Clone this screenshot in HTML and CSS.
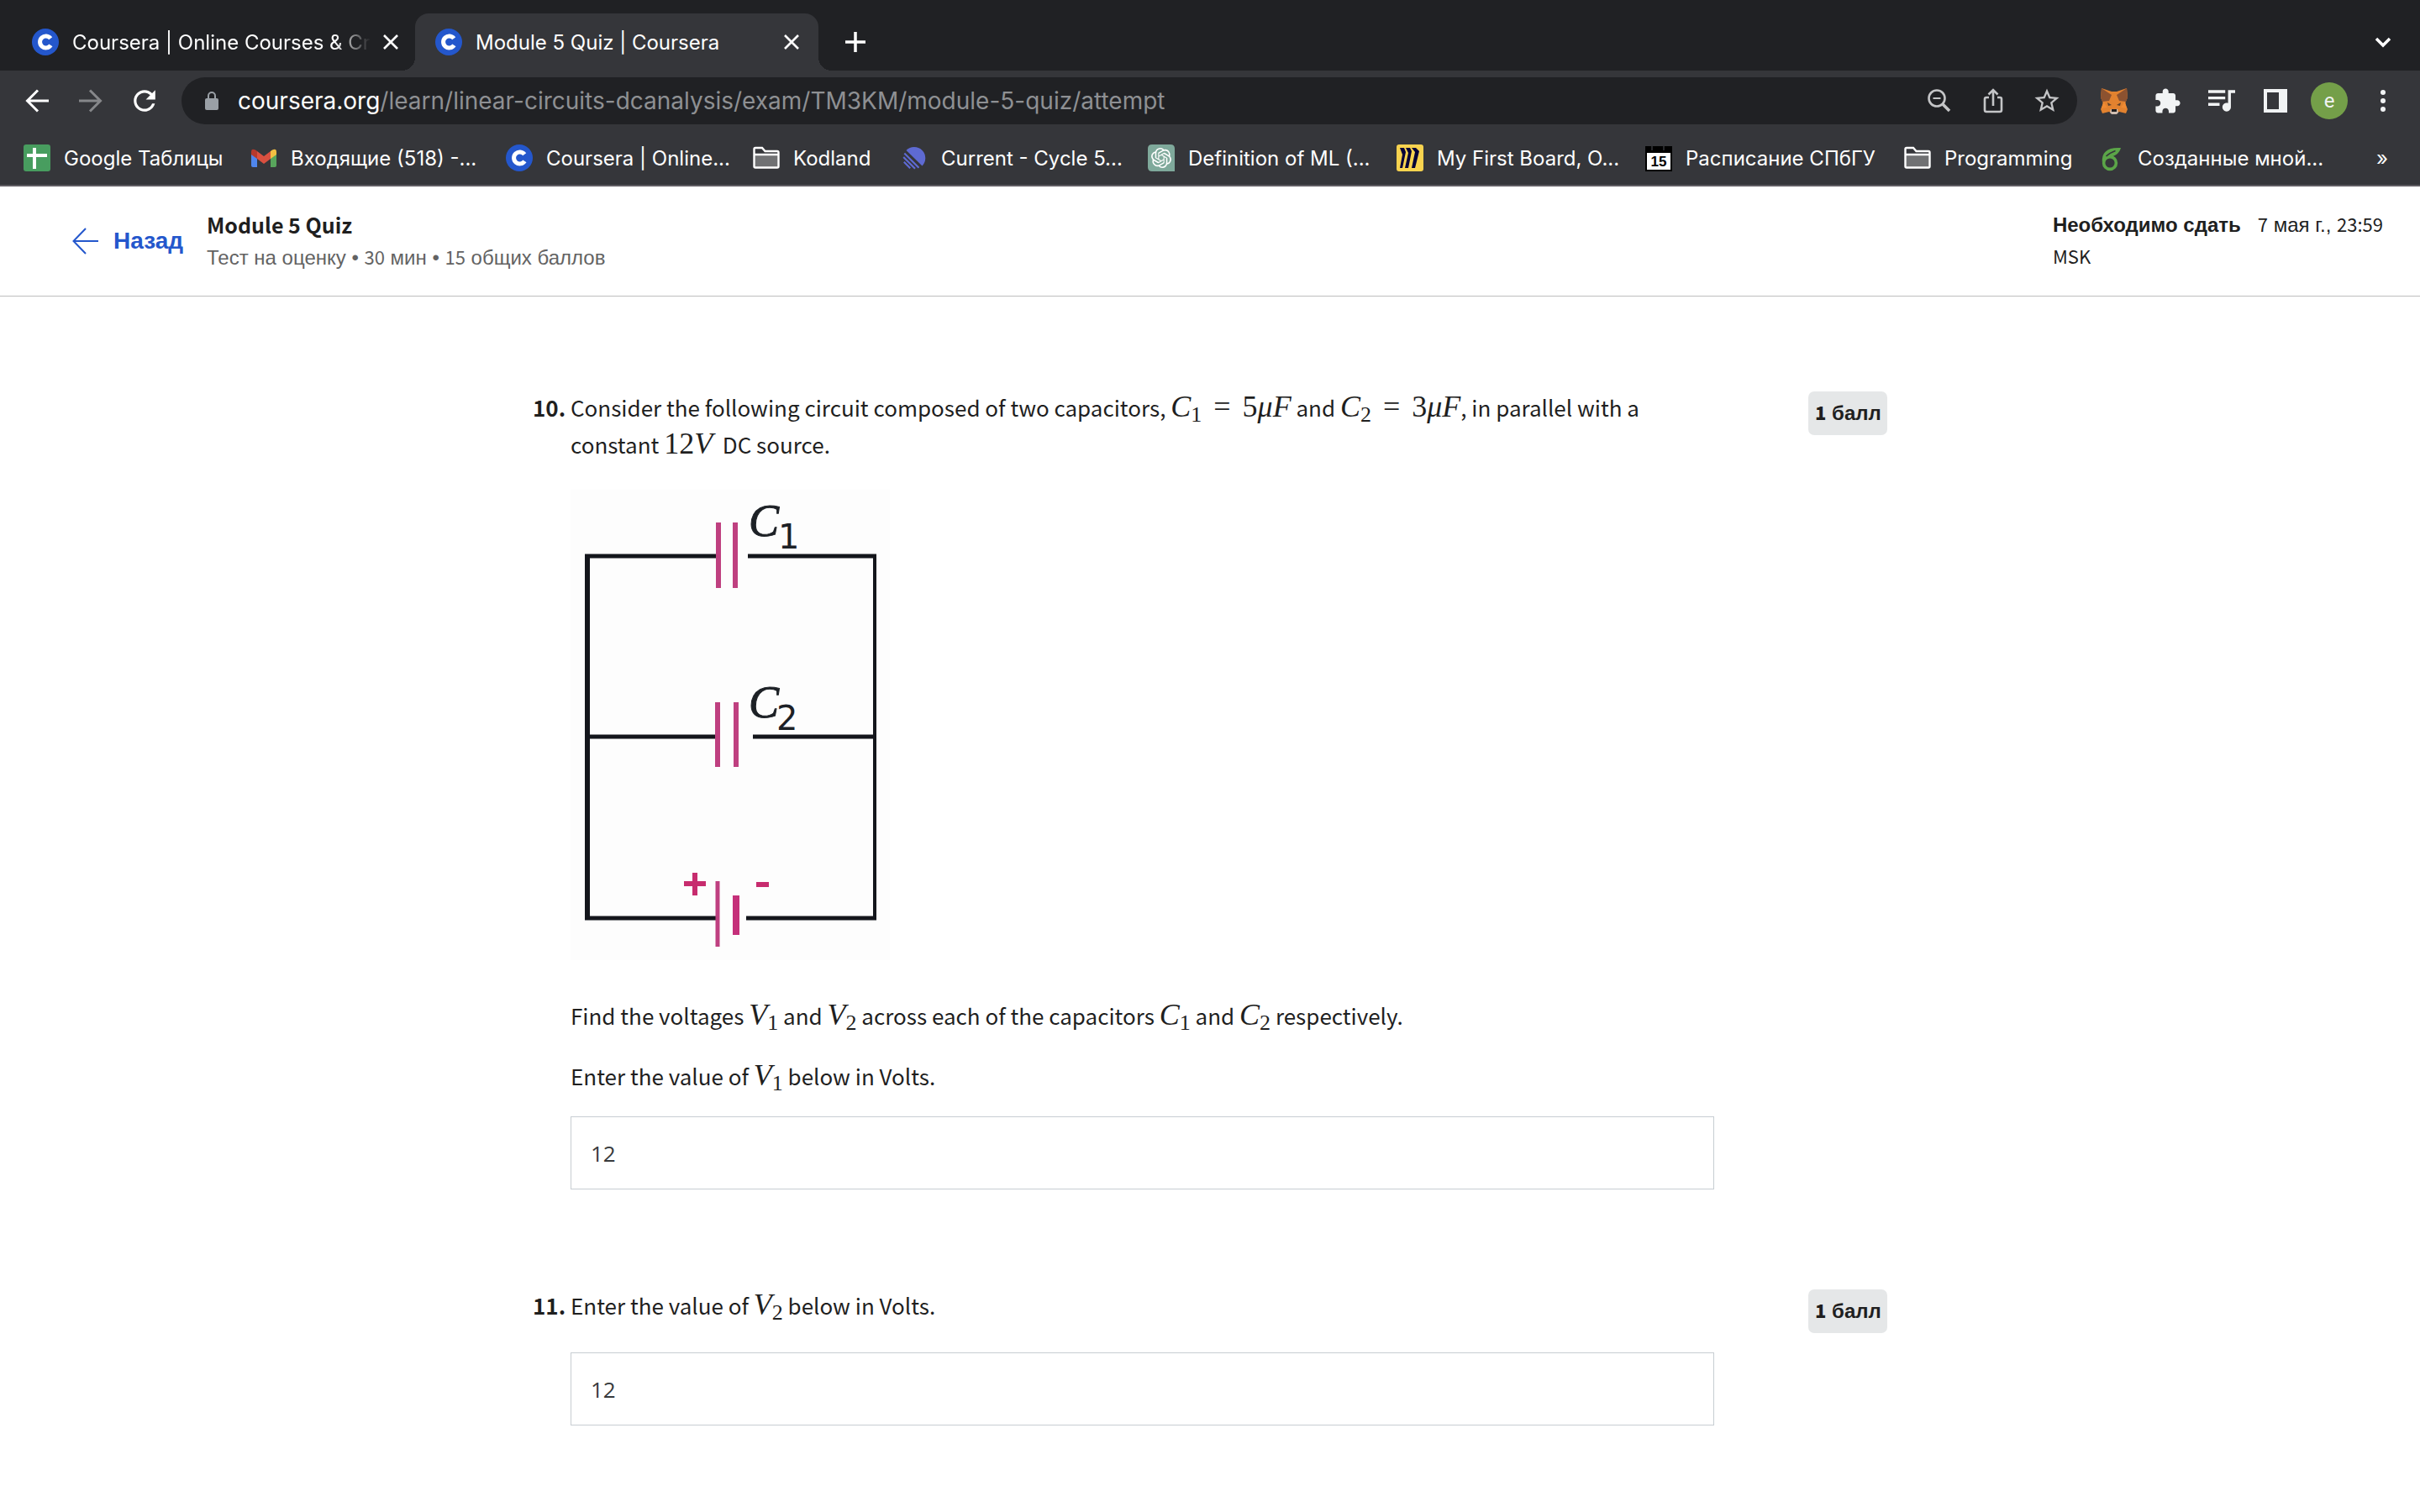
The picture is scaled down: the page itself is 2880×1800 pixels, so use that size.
FILE: index.html
```html
<!DOCTYPE html>
<html lang="ru">
<head>
<meta charset="utf-8">
<title>Module 5 Quiz | Coursera</title>
<link rel="stylesheet" href="styles.css">
</head>
<body>
<svg class="sprite" aria-hidden="true">
  <symbol id="coursera" viewBox="0 0 32 32"><circle cx="16" cy="16" r="16" fill="#2457cc"/><path d="M22.2 11.8A7 7 0 1 0 22.4 19.8" fill="none" stroke="#fff" stroke-width="5"/></symbol>
  <symbol id="close" viewBox="0 0 20 20"><path d="M2 2L18 18M18 2L2 18" stroke="currentColor" stroke-width="2.600"/></symbol>
  <symbol id="folder" viewBox="0 0 32 32"><path d="M1.500 26V5.500q0-1.500 1.500-1.500h8l3.500 4h14.500q1.500 0 1.500 1.500V26q0 1.500-1.500 1.500H3q-1.500 0-1.500-1.500z" fill="#707173"/><path d="M2 5h9l4 4h15v3H2z" fill="#35363a"/><path d="M1.500 26V5.500q0-1.500 1.500-1.500h8l3.500 4h14.500q1.500 0 1.500 1.500V26q0 1.500-1.500 1.500H3q-1.500 0-1.500-1.500zM2 12h28" fill="none" stroke="#fff" stroke-width="2.400"/></symbol>
</svg>

<header class="browser">
  <nav class="tabs" aria-label="Вкладки">
    <div class="tab">
      <svg class="icon"><use href="#coursera"/></svg>
      <span class="tab-title tab-title-faded">Coursera | Online Courses &amp; Cr</span>
      <button class="tab-close" aria-label="Закрыть"><svg><use href="#close"/></svg></button>
    </div>
    <div class="tab tab-active">
      <svg class="icon"><use href="#coursera"/></svg>
      <span class="tab-title">Module 5 Quiz | Coursera</span>
      <button class="tab-close" aria-label="Закрыть"><svg><use href="#close"/></svg></button>
    </div>
    <button class="new-tab" aria-label="Новая вкладка"><svg class="icon" viewBox="0 0 32 32"><path d="M16 4v24M4 16h24" stroke="currentColor" stroke-width="3.500"/></svg></button>
    <button class="tab-list" aria-label="Поиск вкладок"><svg class="icon" viewBox="0 0 32 32"><path d="M8 12l8 8 8-8" fill="none" stroke="currentColor" stroke-width="3.500"/></svg></button>
  </nav>

  <div class="toolbar">
    <button class="tool" aria-label="Назад"><svg class="icon" viewBox="0 0 32 32"><path d="M30 16H5M17 3.500L4.500 16 17 28.500" fill="none" stroke="currentColor" stroke-width="3"/></svg></button>
    <button class="tool tool-off" aria-label="Вперёд"><svg class="icon" viewBox="0 0 32 32"><path d="M2 16h25M15 3.500L27.500 16 15 28.500" fill="none" stroke="currentColor" stroke-width="3"/></svg></button>
    <button class="tool" aria-label="Обновить"><svg class="icon" viewBox="2 2 20 20"><path fill="currentColor" d="M17.650 6.350C16.200 4.900 14.210 4 12 4c-4.420 0-7.990 3.580-7.990 8s3.570 8 7.990 8c3.730 0 6.840-2.550 7.730-6h-2.080c-.82 2.330-3.040 4-5.650 4-3.310 0-6-2.690-6-6s2.690-6 6-6c1.660 0 3.140.69 4.220 1.780L13 11h7V4l-2.350 2.350z"/></svg></button>
    <div class="address">
      <svg class="lock" viewBox="0 0 16 22"><rect y="8" width="16" height="14" rx="2" fill="#9aa0a6"/><path d="M4 9V5a4 4 0 0 1 8 0v4" fill="none" stroke="#9aa0a6" stroke-width="2"/></svg>
      <div class="url" role="textbox" aria-label="Адрес"><span class="host">coursera.org</span>/learn/linear-circuits-dcanalysis/exam/TM3KM/module-5-quiz/attempt</div>
      <button aria-label="Масштаб"><svg class="icon" viewBox="0 0 32 32"><circle cx="13" cy="13" r="9.500" fill="none" stroke="currentColor" stroke-width="2.600"/><path d="M8.500 13h9" stroke="currentColor" stroke-width="2"/><path d="M19.500 19.500L28 28" stroke="currentColor" stroke-width="3.500"/></svg></button>
      <button aria-label="Поделиться"><svg class="icon" viewBox="0 0 32 32"><path d="M11 12H8q-2 0-2 2v13q0 2 2 2h16q2 0 2-2V14q0-2-2-2h-3M16 22V3M10.500 8.500L16 3l5.500 5.500" fill="none" stroke="currentColor" stroke-width="2.600"/></svg></button>
      <button aria-label="В закладки"><svg class="icon" viewBox="1 1 22 22"><path fill="currentColor" d="M22 9.240l-7.190-.62L12 2 9.190 8.630 2 9.240l5.460 4.730L5.820 21 12 17.270 18.180 21l-1.630-7.030L22 9.240zM12 15.400l-3.760 2.270 1-4.280-3.320-2.880 4.380-.38L12 6.100l1.710 4.040 4.380.38-3.320 2.880 1 4.280L12 15.400z"/></svg></button>
    </div>
    <div class="extensions">
      <button class="ext" aria-label="MetaMask"><svg class="icon" viewBox="0 0 32 32"><path d="M1 1l12 4h6l12-4 1 11-3 7 3 7-2 5-8-2-3 2h-6l-3-2-8 2-2-5 3-7-3-7z" fill="#e2822f"/><path d="M1 1l12 8-3 7-8 1-2-5zM31 1L19 9l3 7 8 1 2-5z" fill="#8c5230"/><path d="M8 18l5 3-4 1zM24 18l-5 3 4 1z" fill="#60422b"/><path d="M3 17l5 7-7 1zM29 17l-5 7 7 1z" fill="#f08a32"/><path d="M12 26h8l1 4-2 2h-6l-2-2z" fill="#cfbdb0"/><path d="M13 26h6v3h-6z" fill="#201d1e"/></svg></button>
      <button class="ext" aria-label="Расширения"><svg class="icon" viewBox="1 0 23 23"><path fill="currentColor" d="M20.500 11H19V7c0-1.100-.9-2-2-2h-4V3.500C13 2.120 11.880 1 10.500 1S8 2.120 8 3.500V5H4c-1.100 0-1.990.9-1.990 2v3.800H3.500c1.490 0 2.700 1.210 2.700 2.700s-1.210 2.700-2.700 2.700H2V20c0 1.100.9 2 2 2h3.800v-1.500c0-1.490 1.210-2.700 2.700-2.700 1.490 0 2.700 1.210 2.700 2.700V22H17c1.100 0 2-.9 2-2v-4h1.500c1.380 0 2.500-1.120 2.500-2.500S21.880 11 20.500 11z"/></svg></button>
      <button class="ext" aria-label="Медиа"><svg class="icon" viewBox="3 3 19 19"><path fill="currentColor" d="M15 5H3v2h12V5zm0 4.500H3v2h12v-2zM3 16h8v-2H3v2zM17 5v9.180c-.31-.11-.65-.18-1-.18-1.660 0-3 1.340-3 3s1.340 3 3 3 3-1.340 3-3V7h3V5h-5z"/></svg></button>
      <button class="ext" aria-label="Боковая панель"><svg class="icon" viewBox="0 0 32 32"><path fill="currentColor" fill-rule="evenodd" d="M2 2h28v28H2zM6 6v20h14V6z"/></svg></button>
      <button class="avatar" aria-label="Профиль">e</button>
      <button class="menu" aria-label="Меню"><svg class="icon" viewBox="0 0 32 32"><g fill="currentColor"><circle cx="16" cy="6" r="3"/><circle cx="16" cy="16" r="3"/><circle cx="16" cy="26" r="3"/></g></svg></button>
    </div>
  </div>

  <nav class="bookmarks" aria-label="Закладки">
    <a href="#"><svg class="icon" viewBox="0 0 32 32"><rect width="32" height="32" rx="3" fill="#489d5f"/><path d="M13 4v25M4 13h24" stroke="#fff" stroke-width="4"/></svg>Google Таблицы</a>
    <a href="#"><svg class="icon" viewBox="0 0 32 32"><path d="M1 9l7 5v13H3q-2 0-2-2z" fill="#4f86ec"/><path d="M31 9l-7 5v13h5q2 0 2-2z" fill="#58a55c"/><path d="M24 8l2-1.500q5-2.500 5 2.500v3l-7 5z" fill="#f2bf42"/><path d="M8 8v9l-7-5V9q0-5 5-2.500z" fill="#b6392c"/><path d="M8 8l8 6 8-6v9l-8 6-8-6z" fill="#d95040"/></svg>Входящие (518) -...</a>
    <a href="#"><svg class="icon"><use href="#coursera"/></svg>Coursera | Online...</a>
    <a href="#"><svg class="icon"><use href="#folder"/></svg>Kodland</a>
    <a href="#"><svg class="icon" viewBox="0 0 32 32"><path d="M6.500 7A13 13 0 0 1 25.500 25.500z" fill="#5e6ad2"/><path d="M4.300 10.500L21.500 27.700M3.200 15L17 28.800M3.800 20.800L11.200 28.200" stroke="#5e6ad2" stroke-width="2.200"/></svg>Current - Cycle 5...</a>
    <a href="#"><svg class="icon" viewBox="0 0 32 32"><path d="M5 0h22q5 0 5 5v27H5q-5 0-5-5V5q0-5 5-5z" fill="#7fa99b"/><path transform="translate(4 4)" fill="#fff" d="M22.282 9.821a5.985 5.985 0 0 0-.516-4.911 6.046 6.046 0 0 0-6.510-2.900A6.065 6.065 0 0 0 4.981 4.182a5.985 5.985 0 0 0-3.998 2.900 6.046 6.046 0 0 0 .743 7.097 5.980 5.980 0 0 0 .511 4.911 6.051 6.051 0 0 0 6.515 2.900A5.985 5.985 0 0 0 13.260 24a6.056 6.056 0 0 0 5.772-4.206 5.989 5.989 0 0 0 3.998-2.900 6.056 6.056 0 0 0-.748-7.073zm-9.022 12.608a4.476 4.476 0 0 1-2.876-1.041l.142-.080 4.778-2.758a.795.795 0 0 0 .393-.681v-6.737l2.020 1.169a.071.071 0 0 1 .038.052v5.583a4.504 4.504 0 0 1-4.495 4.494zm-9.661-4.125a4.471 4.471 0 0 1-.535-3.014l.142.085 4.783 2.758a.771.771 0 0 0 .781 0l5.843-3.369v2.332a.080.080 0 0 1-.033.062L9.740 19.950a4.499 4.499 0 0 1-6.141-1.646zM2.341 7.896a4.485 4.485 0 0 1 2.366-1.973V11.600a.766.766 0 0 0 .388.677l5.814 3.354-2.020 1.169a.076.076 0 0 1-.071 0l-4.830-2.787A4.504 4.504 0 0 1 2.341 7.872zm16.596 3.856L13.104 8.364 15.119 7.200a.076.076 0 0 1 .071 0l4.830 2.791a4.494 4.494 0 0 1-.677 8.104v-5.677a.790.790 0 0 0-.407-.667zm2.011-3.023l-.142-.085-4.774-2.782a.776.776 0 0 0-.785 0L9.409 9.230V6.897a.066.066 0 0 1 .028-.062l4.830-2.787a4.499 4.499 0 0 1 6.680 4.660zM8.307 12.863l-2.020-1.164a.080.080 0 0 1-.038-.057V6.074a4.499 4.499 0 0 1 7.376-3.454l-.142.081L8.704 5.459a.795.795 0 0 0-.393.681zm1.098-2.365l2.602-1.500 2.607 1.500v2.999l-2.597 1.500-2.607-1.500Z"/></svg>Definition of ML (...</a>
    <a href="#"><svg class="icon" viewBox="0 0 32 32"><rect width="32" height="32" rx="3" fill="#f8d34f"/><path d="M4 4h5l2 5-4 19H4l3-16zM11 4h5l2 4-4 20h-4l4-18zM18 4h5l4 4-5 20h-4l4-19z" fill="#050038"/></svg>My First Board, O...</a>
    <a href="#"><svg class="icon" viewBox="0 0 32 32"><path d="M0 2h32v30H0z" fill="#000"/><path d="M2 10h28v20H2z" fill="#fff"/><path d="M8 0v7M22 0v7" stroke="#35363a" stroke-width="1.500"/><text x="16" y="26" text-anchor="middle" font-family="Liberation Sans, sans-serif" font-size="17" font-weight="700">15</text></svg>Расписание СПбГУ</a>
    <a href="#"><svg class="icon"><use href="#folder"/></svg>Programming</a>
    <a href="#"><svg class="icon" viewBox="0 0 32 32"><circle cx="15" cy="22" r="7.400" fill="none" stroke="#5ba548" stroke-width="3.600"/><path d="M5.800 21C5 9 12 3 28 4 26 11 21 14 15 14.500 11 15 9 16 8 19z" fill="#5ba548"/><path d="M10.500 14q4-4 11-6.500" fill="none" stroke="#35363a" stroke-width="1.500"/></svg>Созданные мной...</a>
    <button class="more" aria-label="Другие закладки">»</button>
  </nav>
</header>

<header class="quiz-head">
  <a class="back" href="#"><svg viewBox="0 0 32 32"><path d="M31 16H2M16 1L1.500 16 16 31" fill="none" stroke="currentColor" stroke-width="2"/></svg><span>Назад</span></a>
  <div class="quiz-name">
    <h1>Module 5 Quiz</h1>
    <p>Тест на оценку • <b>30</b> мин • <b>15</b> общих баллов</p>
  </div>
  <div class="due"><strong>Необходимо сдать</strong><span><b>7</b> мая г., <b>23:59</b></span><br><b>MSK</b></div>
</header>

<main class="quiz">
  <section class="question">
    <span class="number">10.</span>
    <div class="body">
      <p>Consider the following circuit composed of two capacitors, <span class="math"><i>C</i><sub>1</sub><span class="eq">=</span>5<i>μF</i></span> and <span class="math"><i>C</i><sub>2</sub><span class="eq">=</span>3<i>μF</i></span>, in parallel with a constant <span class="math">12<i>V</i></span>&nbsp; DC source.</p>
      <svg class="circuit" viewBox="0 0 380 560" role="img" aria-label="Circuit">
        <rect width="380" height="560" fill="#fdfdfd"/>
        <g fill="none" stroke="#14161c">
          <path d="M20 77V512" stroke-width="6"/>
          <path d="M17 79H173M211 79H364M20 294H173M217 294H361M17 510H173M209 510H364" stroke-width="5"/>
          <path d="M362 79V510" stroke-width="4"/>
        </g>
        <g fill="none" stroke="#bf4080">
          <path d="M176 39V117M196 39V117M175 253V330M197 253V330" stroke-width="6"/>
          <path d="M175 466V544" stroke-width="5"/>
          <path d="M197 483V530" stroke="#c5307a" stroke-width="8"/>
        </g>
        <path d="M135 469H161M148 456V483M221 470H236" stroke="#c72c6e" stroke-width="6"/>
        <g fill="#1d2126" stroke="#1d2126">
          <text class="cap" x="212" y="55">C</text><text class="cap-sub" x="247" y="70">1</text>
          <text class="cap" x="212" y="271">C</text><text class="cap-sub" x="245" y="286">2</text>
        </g>
      </svg>
      <p>Find the voltages <span class="math"><i>V</i><sub>1</sub></span> and <span class="math"><i>V</i><sub>2</sub></span> across each of the capacitors <span class="math"><i>C</i><sub>1</sub></span> and <span class="math"><i>C</i><sub>2</sub></span> respectively.</p>
      <label for="answer-10">Enter the value of <span class="math"><i>V</i><sub>1</sub></span> below in Volts.</label>
      <input id="answer-10" type="text" value="12">
    </div>
    <span class="points"><b>1</b> балл</span>
  </section>
  <section class="question">
    <span class="number">11.</span>
    <div class="body">
      <p><label for="answer-11">Enter the value of <span class="math"><i>V</i><sub>2</sub></span> below in Volts.</label></p>
      <input id="answer-11" type="text" value="12">
    </div>
    <span class="points"><b>1</b> балл</span>
  </section>
</main>
</body>
</html>
```
FILE: styles.css
```css
* { box-sizing: border-box; }

body {
  margin: 0;
  background: #fff;
  color: #1f1f1f;
  font-family: "Noto Sans CJK SC", "Liberation Sans", sans-serif;
  font-size: 26px;
}

button {
  display: flex;
  align-items: center;
  justify-content: center;
  padding: 0;
  border: 0;
  background: none;
  color: inherit;
  font: inherit;
}

a { color: inherit; text-decoration: none; }

.sprite { position: absolute; width: 0; height: 0; }

.icon { display: block; flex: none; width: 32px; height: 32px; }

/* Browser frame */
.browser {
  background: #35363a;
  border-bottom: 2px solid #5f5c62;
  color: #fff;
  font-family: Inter, sans-serif;
  font-size: 24px;
}

.tabs {
  display: flex;
  height: 84px;
  padding: 16px 28px 0 14px;
  background: #202124;
}

.tab {
  display: flex;
  align-items: center;
  width: 480px;
  padding: 0 22px 0 24px;
}

.tab-active {
  position: relative;
  background: #35363a;
  border-radius: 16px 16px 0 0;
}

.tab-active::before,
.tab-active::after {
  content: "";
  position: absolute;
  bottom: 0;
  width: 16px;
  height: 16px;
}

.tab-active::before {
  right: 100%;
  background: radial-gradient(circle at 0 0, transparent 16px, #35363a 16px);
}

.tab-active::after {
  left: 100%;
  background: radial-gradient(circle at 100% 0, transparent 16px, #35363a 16px);
}

.tab-title {
  flex: 1;
  margin: 0 14px 0 16px;
  white-space: nowrap;
}

.tab-title-faded {
  -webkit-mask-image: linear-gradient(90deg, #000 88%, transparent);
  mask-image: linear-gradient(90deg, #000 88%, transparent);
}

.tab-close svg { width: 20px; height: 20px; }

.new-tab { margin-left: 28px; }

.tab-list { margin-left: auto; }

.toolbar {
  display: flex;
  align-items: center;
  gap: 32px;
  height: 72px;
  padding: 0 28px;
}

.tool-off { color: #86878a; }

.address {
  display: flex;
  flex: 1;
  align-items: center;
  gap: 32px;
  height: 56px;
  margin-left: -4px;
  padding: 0 20px 0 28px;
  border-radius: 28px;
  background: #202124;
  color: #c4c5c7;
}

.lock { width: 16px; height: 22px; }

.url {
  flex: 1;
  margin-left: -9px;
  color: #8e9093;
  font-size: 28px;
  white-space: nowrap;
}

.host { color: #fff; }

.extensions {
  display: flex;
  align-items: center;
  gap: 32px;
  margin-left: -4px;
  color: #f1f3f4;
}

.avatar {
  width: 44px;
  height: 44px;
  margin: 0 -6px;
  border-radius: 50%;
  background: #749f49;
  font-family: Roboto, sans-serif;
}

.bookmarks {
  display: grid;
  grid-template-columns: 270px 304px 294px 176px 294px 296px 296px 308px 230px 270px 1fr;
  align-items: center;
  height: 64px;
  padding: 0 28px;
  white-space: nowrap;
}

.bookmarks a { display: flex; align-items: center; gap: 16px; }

.more { justify-self: end; padding: 0 10px; }

/* Quiz header */
.quiz-head {
  display: flex;
  align-items: center;
  height: 131px;
  padding: 0 44px 0 86px;
  border-bottom: 1px solid #bdbdbd;
}

.quiz-head b { font-family: "Noto Sans CJK SC", sans-serif; font-size: 22px; font-weight: 400; line-height: 1; }

.back {
  display: flex;
  align-items: center;
  gap: 17px;
  width: 160px;
  color: #2457cc;
  font: 700 28px/32px "Liberation Sans", sans-serif;
}

.back svg { flex: none; width: 32px; height: 32px; }

.quiz-name { font: 24px/40px "Liberation Sans", sans-serif; }

h1 {
  margin: 0;
  font: 700 25px/40px "Noto Sans CJK SC", sans-serif;
}

.quiz-name p { margin: 0; color: #636363; }

.due {
  margin-left: auto;
  font: 24px/38px "Liberation Sans", sans-serif;
}

.due strong { margin-right: 20px; }

/* Questions */
.quiz {
  display: grid;
  gap: 116px;
  max-width: 1612px;
  margin: 0 auto;
  padding: 110px 0 100px;
}

.question {
  display: grid;
  grid-template-columns: 45px 1fr 94px;
  align-items: start;
  line-height: 44px;
}

.number { font-weight: 700; }

.body { margin-right: 112px; }

.body p { margin: 0 0 28px; }

.math { font: 36px/40px "Liberation Serif", serif; white-space: nowrap; }

.math sub { font-size: 26px; line-height: 0; vertical-align: -6px; }

.eq { margin: 0 14px; }

.circuit { display: block; width: 380px; height: 560px; margin: 32px 0 44px; }

.cap { font: italic 54px "Liberation Serif", serif; }

.cap-sub { font: 40px "DejaVu Sans", sans-serif; stroke: none; }

.body input {
  display: block;
  width: 100%;
  height: 87px;
  margin-top: 26px;
  padding: 0 23px;
  border: 1px solid #c7cdd2;
  background: #fff;
  color: #373a3c;
  font: 26px "Open Sans", sans-serif;
}

.body p + input { margin-top: 34px; }

.points {
  margin-top: 3px;
  padding: 0 8px;
  border-radius: 7px;
  background: #e5e7e8;
  font: 700 24px/52px "Liberation Sans", sans-serif;
  white-space: nowrap;
}

.points b { font-family: "Noto Sans CJK SC", sans-serif; font-size: 22px; line-height: 1; }
```
